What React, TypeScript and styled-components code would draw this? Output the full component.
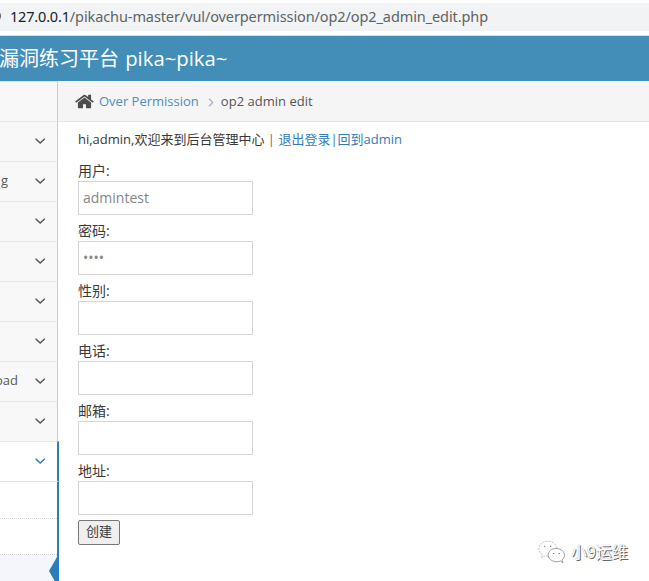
import React from 'react';
import styled, { createGlobalStyle } from 'styled-components';

const GlobalStyle = createGlobalStyle`
  * { box-sizing: border-box; }
  html, body { margin: 0; overflow: hidden; background: #fff; }
  body {
    font-family: "Open Sans", "Noto Sans CJK SC", sans-serif;
    font-size: 13px;
    color: #393939;
  }
`;

const Page = styled.div`
  position: relative;
  width: 649px;
  height: 581px;
  display: flex;
  flex-direction: column;
  overflow: hidden;
`;

const BrowserBar = styled.div`
  flex: none;
  height: 36px;
  padding: 3px 0 4px;
  border-bottom: 1px solid #d9dfe5;
`;

const AddressField = styled.div`
  height: 28px;
  display: flex;
  align-items: center;
  background: #f1f3f4;
  color: #5f6368;
  font: 14.5px/26px "Noto Sans", sans-serif;
  padding-bottom: 2px;
  white-space: nowrap;
`;

const SiteInfo = styled.span`
  width: 7px;
  height: 12px;
  margin-left: -6px;
  margin-right: 9px;
  border-radius: 0 6px 6px 0;
  border: 2px solid #5f6368;
  border-left: 0;
`;

const Host = styled.span`
  color: #202124;
  letter-spacing: -0.18px;
`;

const Path = styled.span`
  letter-spacing: -0.1px;
`;

const Navbar = styled.header`
  flex: none;
  height: 45px;
  background: #438eb9;
  color: #fff;
  font-size: 20px;
  line-height: 44px;
  white-space: nowrap;
`;

const Brand = styled.span`
  display: block;
  margin-left: -1px;
  word-spacing: 1px;
`;

const BrandLatin = styled.span`
  font-size: 20.3px;
`;

const Body = styled.div`
  flex: 1;
  min-height: 0;
  display: flex;
`;

const Sidebar = styled.nav`
  flex: none;
  width: 59px;
  display: flex;
  flex-direction: column;
`;

const MenuTop = styled.div`
  flex: none;
  width: 58px;
  height: 40px;
  background: #f8f8f8;
  border-top: 1px solid #e0e0e0;
  border-right: 1px solid #ccc;
`;

const MenuItem = styled.div<{ $open?: boolean }>`
  flex: none;
  width: ${p => (p.$open ? 59 : 58)}px;
  height: 40px;
  display: flex;
  align-items: center;
  justify-content: flex-end;
  padding-right: 11px;
  padding-bottom: 2px;
  border-top: 1px solid #e5e5e5;
  border-right: ${p => (p.$open ? '2px solid #2b7dbc' : '1px solid #ccc')};
  background: ${p => (p.$open ? '#fff' : '#f8f8f8')};
  color: ${p => (p.$open ? '#2b7dbc' : '#585858')};
  white-space: nowrap;
  overflow: hidden;
  svg { flex: none; }
`;

const MenuText = styled.span<{ $gap: number }>`
  flex: none;
  margin-right: ${p => p.$gap}px;
  line-height: 17px;
`;

const Submenu = styled.div`
  flex: 1;
  display: flex;
  flex-direction: column;
  border-top: 1px solid #e5e5e5;
  border-right: 2px solid #2b7dbc;
`;

const SubItem = styled.div<{ $active?: boolean }>`
  position: relative;
  height: 36px;
  border-bottom: 1px dotted #d5d5d5;
  background: ${p => (p.$active ? '#f4f6fb' : '#fff')};
  &:first-child { height: 37px; }
`;

const ActiveArrow = styled.svg`
  position: absolute;
  right: 0;
  top: 2px;
`;

const Content = styled.main`
  flex: 1;
  margin-left: -1px;
`;

const Breadcrumbs = styled.div`
  height: 41px;
  display: flex;
  align-items: center;
  padding-left: 17px;
  background: #f5f5f5;
  border-bottom: 1px solid #e5e5e5;
  line-height: 20px;
  color: #555;
  white-space: nowrap;
`;

const Crumb = styled.a`
  margin-left: 5px;
  color: #4c8fbd;
`;

const CrumbCurrent = styled.span`
  letter-spacing: 0.02px;
`;

const Separator = styled.svg`
  margin: 2px 7px 0 9px;
`;

const Main = styled.section`
  padding: 7px 20px 0;
`;

const Greeting = styled.p`
  margin: 0 0 12px;
  line-height: 20px;
  white-space: nowrap;
  a { color: #337ab7; }
`;

const Bar = styled.i`
  font-style: normal;
  color: #8b6546;
`;

const Field = styled.label`
  display: block;
  height: 60px;
  font-size: 14px;
  line-height: 19px;
`;

const Input = styled.input`
  display: block;
  width: 175px;
  height: 34px;
  margin-top: 1px;
  padding: 5px 4px 6px;
  border: 1px solid #d5d5d5;
  border-radius: 0;
  outline: none;
  background: #fff;
  color: #858585;
  font: 14px "Open Sans", sans-serif;
`;

const Submit = styled.button`
  display: block;
  width: 42px;
  height: 25px;
  margin-top: -1px;
  padding: 0 0 2px;
  border: 1px solid #767676;
  border-radius: 2px;
  background: #efefef;
  color: #393939;
  font: 13px/21px "Open Sans", "Noto Sans CJK SC", sans-serif;
`;

const Watermark = styled.div`
  position: absolute;
  left: 538px;
  top: 540px;
  display: flex;
  align-items: center;
  gap: 6px;
  color: #fff;
  font: 16px/24px "Noto Sans CJK SC", sans-serif;
  text-shadow: 1px 1px 0 #666, 0 0 1px #999;
  white-space: nowrap;
`;

const WatermarkText = styled.span`
  margin-top: -2px;
`;

const Chevron = () => (
  <svg width="12" height="8" viewBox="0 0 12 8" fill="none" stroke="currentColor" strokeWidth="1.5">
    <path d="M1.6 1.7 6.2 6l4.6-4.3" />
  </svg>
);

const HomeIcon = () => (
  <svg width="19" height="19" viewBox="64 0 1664 1792" preserveAspectRatio="none" fill="#4d4d4d">
    <path d="M1472 992v480q0 26-19 45t-45 19h-384v-384h-256v384h-384q-26 0-45-19t-19-45v-480q0-1 .5-3t.5-3l575-474 575 474q1 2 1 6zm223-69l-62 74q-8 9-21 11h-3q-13 0-21-7l-692-577-692 577q-12 8-24 7-13-2-21-11l-62-74q-8-10-7-23.5t11-21.5l719-599q32-26 76-26t76 26l244 204v-195q0-14 9-23t23-9h192q14 0 23 9t9 23v408l219 182q10 8 11 21.5t-7 23.5z" />
  </svg>
);

const ChatLogo = () => (
  <svg width="27" height="24" viewBox="0 0 27 24" fill="#fff" stroke="#777" strokeWidth=".7">
    <path stroke="#aaa" strokeDasharray="2 1" d="M3.5 17.7 4.5 14.8C-.4 11.5 0 5.6 4 3 9.3-.6 17.2 1.7 18.6 7.5c.8 5.3-6 10.1-11 8.2Z" />
    <path d="M25 22.8 22.6 21C17.5 23 10.7 20.6 10.2 15.5 9.9 10.9 14 8.5 18 8.5c5 0 8.5 3.1 8.5 6.8 0 1.9-1 3.5-2.5 4.6Z" />
    <path d="M6 6.2h1.4M12 6.2h1.4M15 13.5h1.3M20.5 13.5h1.3" strokeWidth="1.1" />
  </svg>
);

const menu = ['', 'g', '', '', '', '', 'oad', ''];
const fields = [
  { label: '用户:', value: 'admintest' },
  { label: '密码:', value: '••••' },
  { label: '性别:', value: '' },
  { label: '电话:', value: '' },
  { label: '邮箱:', value: '' },
  { label: '地址:', value: '' },
];

export default function App() {
  return (
    <>
      <GlobalStyle />
      <Page>
        <BrowserBar>
          <AddressField>
            <SiteInfo />
            <Host>127.0.0.1</Host>
            <Path>/pikachu-master/vul/overpermission/op2/op2_admin_edit.php</Path>
          </AddressField>
        </BrowserBar>
        <Navbar><Brand>漏洞练习平台 <BrandLatin>pika~pika~</BrandLatin></Brand></Navbar>
        <Body>
          <Sidebar>
            <MenuTop />
            {menu.map((text, i) => (
              <MenuItem key={i}>
                {text && <MenuText $gap={text === 'g' ? 26 : 16}>{text}</MenuText>}
                <Chevron />
              </MenuItem>
            ))}
            <MenuItem $open><Chevron /></MenuItem>
            <Submenu>
              <SubItem />
              <SubItem />
              <SubItem $active>
                <ActiveArrow width="8" height="28" viewBox="0 0 8 28">
                  <path d="M8 0 0 14l8 14Z" fill="#2b7dbc" />
                </ActiveArrow>
              </SubItem>
            </Submenu>
          </Sidebar>
          <Content>
            <Breadcrumbs>
              <HomeIcon />
              <Crumb>Over Permission</Crumb>
              <Separator width="6" height="9" viewBox="0 0 6 9" fill="none" stroke="#b2b6bf" strokeWidth="1.5">
                <path d="m1 .8 3.7 3.7L1 8.2" />
              </Separator>
              <CrumbCurrent>op2 admin edit</CrumbCurrent>
            </Breadcrumbs>
            <Main>
              <Greeting>
                hi,admin,欢迎来到后台管理中心 <Bar>|</Bar> <a>退出登录</a><a>|</a><a>回到admin</a>
              </Greeting>
              {fields.map(field => (
                <Field key={field.label}>
                  {field.label}
                  <Input type="text" defaultValue={field.value} />
                </Field>
              ))}
              <Submit>创建</Submit>
            </Main>
          </Content>
        </Body>
        <Watermark><ChatLogo /><WatermarkText>小9运维</WatermarkText></Watermark>
      </Page>
    </>
  );
}
